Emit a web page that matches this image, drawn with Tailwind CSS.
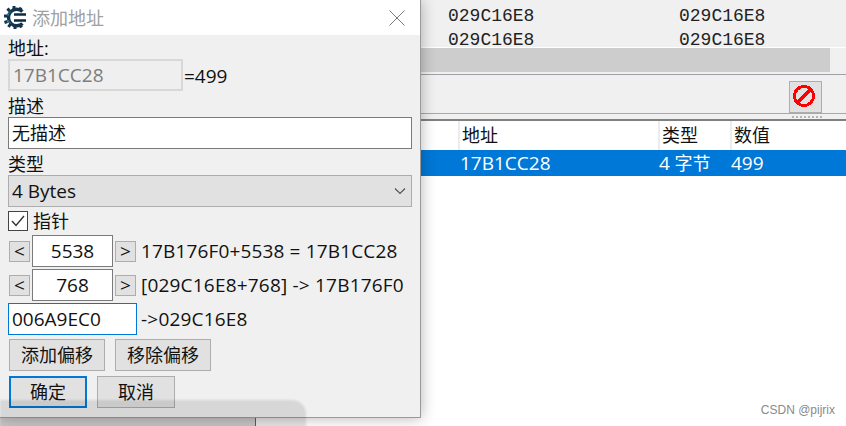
<!DOCTYPE html>
<html lang="en">
<head>
    <meta charset="UTF-8">
    <title>添加地址</title>
    <script src="https://cdn.jsdelivr.net/npm/@tailwindcss/browser@4"></script>
</head>
<body class="relative w-[846px] h-[426px] overflow-hidden bg-white text-[18px] leading-[24px] text-[#111] font-['Open_Sans','Noto_Sans_CJK_SC',sans-serif]">

    <!-- main window behind the dialog -->
    <div class="flex flex-col w-full h-full">
        <div class="h-[47px] pt-[9px] bg-[#f0f0f0] font-['Liberation_Mono',monospace] leading-[14px] text-[#222]">
            <div class="flex h-[24px] pl-[448px]"><span class="w-[231px]">029C16E8</span><span>029C16E8</span></div>
            <div class="flex h-[14px] pl-[448px]"><span class="w-[231px]">029C16E8</span><span>029C16E8</span></div>
        </div>
        <div class="h-[25px] border-t border-white bg-[#f0f0f0]">
            <div class="w-[830px] h-[24px] bg-[#cdcdcd]"></div>
        </div>
        <div class="h-[2px] bg-[#f0f0f0]"></div>
        <div class="h-[39px] flex items-start justify-end pt-[6px] pr-[24px] bg-[#f0f0f0] border-t border-[#a0a0a8]">
            <div class="w-[33px] h-[32px] pr-[3px] pb-[2px] flex items-center justify-center bg-[#e1e1e1] border border-[#adadad]">
                <svg width="24" height="24" viewBox="0 0 24 24" shape-rendering="crispEdges" fill="none" stroke="#ff0000" stroke-width="3">
                    <circle cx="12" cy="12" r="9.500"/>
                    <path d="M6 18 18 6"/>
                </svg>
            </div>
        </div>
        <div class="h-[6px] border-t border-[#a8a8a8] bg-[#f0f0f0] flex justify-end pr-[24px] pt-[2px]">
            <div class="w-[30px] h-[2px] bg-[repeating-linear-gradient(90deg,#b4b4b4_0_2px,transparent_2px_4px)]"></div>
        </div>
        <div class="h-[31px] flex border-t-2 border-[#808080] bg-white pl-[458px]">
            <div class="w-[200px] pl-[2px] pt-[2px] border-l-2 border-[#ececec]">地址</div>
            <div class="w-[72px] pl-[2px] pt-[2px] border-l-2 border-[#ececec]">类型</div>
            <div class="pl-[2px] pt-[2px] border-l-2 border-[#ececec]">数值</div>
        </div>
        <div class="h-[26px] flex items-center bg-[#0078d7] text-white pl-[460px]">
            <span class="w-[199px] text-[19px]">17B1CC28</span>
            <span class="w-[72px]"><span class="text-[19px]">4</span> 字节</span>
            <span class="text-[19px]">499</span>
        </div>
    </div>

    <!-- bottom strip under the dialog -->
    <div class="absolute left-0 top-[418px] w-[256px] h-[8px] bg-[#dcdcdc] border-r border-[#666]"></div>

    <!-- add address dialog -->
    <div class="absolute left-0 top-0 w-[421px] h-[418px] flex flex-col bg-[#f0f0f0] border-r border-b border-[#9a9a9a] shadow-[0_0_14px_rgba(0,0,0,0.3)]">
        <div class="h-[35px] shrink-0 flex items-center bg-white pl-[4px] pr-[15px]">
            <svg width="23" height="23" viewBox="0 0 23 23" fill="none">
                <path d="M18.500 5.500A8.300 8.300 0 1 0 18.500 17.500" stroke="#12344c" stroke-width="3.400"/>
                <path d="M10 0v3M3.500 2.500l2 2.500M0 10h3M0.500 16.500l3-1M4.500 21l2-3M11 23v-3M17.500 21.500l-1.500-3M17 1.500l-1.500 3" stroke="#12344c" stroke-width="3"/>
                <path d="M10 8.500h12M10 14.500h12" stroke="#0c2a40" stroke-width="2.600"/>
                <path d="M3.800 10a7.500 7.500 0 0 1 3-4.500M4 14a7.500 7.500 0 0 0 3 3.500" stroke="#2a7fa8" stroke-width="1"/>
            </svg>
            <span class="ml-[5px] text-[#a0a0a0]">添加地址</span>
            <svg class="ml-auto" width="16" height="16" viewBox="0 0 16 16" stroke="#7a7a7a" stroke-width="1"><path d="M0.500 0.500 15.500 15.500M15.500 0.500 0.500 15.500"/></svg>
        </div>

        <div class="flex flex-col pl-[8px] pr-[8px]">
            <div class="h-[24px] pt-[1px]">地址:</div>
            <div class="flex items-center h-[32px]">
                <div class="w-[175px] h-[32px] pl-[3px] flex items-center bg-[#efefef] border-2 border-[#d8d8d8] text-[19px] text-[#7d7d7d]">17B1CC28</div>
                <span class="ml-[1px] mt-[2px] text-[19px]">=499</span>
            </div>
            <div class="h-[26px] pt-[3px]">描述</div>
            <div class="h-[32px] pl-[3px] flex items-center bg-white border border-[#7a7a7a]">无描述</div>
            <div class="h-[26px] pt-[3px]">类型</div>
            <div class="h-[32px] pl-[3px] pr-[5px] flex items-center justify-between bg-[#e1e1e1] border border-[#adadad]">
                <span class="text-[19px]">4 Bytes</span>
                <svg width="12" height="8" viewBox="0 0 12 8" fill="none" stroke="#555" stroke-width="1.200"><path d="M1 1.500 6 6.500 11 1.500"/></svg>
            </div>
            <div class="flex items-center h-[20px] mt-[4px]">
                <div class="w-[20px] h-[20px] flex items-center justify-center bg-white border border-[#444]">
                    <svg width="14" height="12" viewBox="0 0 14 12" fill="none" stroke="#333" stroke-width="1.400"><path d="M1 6 5 10.500 13 1"/></svg>
                </div>
                <span class="ml-[5px]">指针</span>
            </div>

            <div class="flex items-center h-[32px] mt-[4px] text-[19px]">
                <button class="w-[21px] h-[21px] ml-[1px] flex items-center justify-center bg-[#e1e1e1] border border-[#adadad]">&lt;</button>
                <div class="w-[81px] h-[32px] ml-[2px] flex items-center justify-center bg-white border border-[#7a7a7a]">5538</div>
                <button class="w-[21px] h-[21px] ml-[2px] flex items-center justify-center bg-[#e1e1e1] border border-[#adadad]">&gt;</button>
                <span class="ml-[5px] tracking-[0.15px]">17B176F0+5538 = 17B1CC28</span>
            </div>
            <div class="flex items-center h-[32px] mt-[2px] text-[19px]">
                <button class="w-[21px] h-[21px] ml-[1px] flex items-center justify-center bg-[#e1e1e1] border border-[#adadad]">&lt;</button>
                <div class="w-[81px] h-[32px] ml-[2px] flex items-center justify-center bg-white border border-[#7a7a7a]">768</div>
                <button class="w-[21px] h-[21px] ml-[2px] flex items-center justify-center bg-[#e1e1e1] border border-[#adadad]">&gt;</button>
                <span class="ml-[5px] tracking-[0.2px]">[029C16E8+768] -&gt; 17B176F0</span>
            </div>
            <div class="flex items-center h-[32px] mt-[2px] text-[19px]">
                <div class="w-[129px] h-[32px] pl-[3px] flex items-center bg-white border border-[#0078d7]">006A9EC0</div>
                <span class="ml-[4px] tracking-[0.2px]">-&gt;029C16E8</span>
            </div>
            <div class="flex h-[32px] mt-[4px] ml-[1px] gap-[10px]">
                <button class="w-[96px] h-[32px] bg-[#e1e1e1] border border-[#adadad]">添加偏移</button>
                <button class="w-[96px] h-[32px] bg-[#e1e1e1] border border-[#adadad]">移除偏移</button>
            </div>
            <div class="flex h-[32px] mt-[5px] ml-[1px] gap-[10px]">
                <button class="w-[78px] h-[32px] bg-[#e1e1e1] border-2 border-[#0078d7]">确定</button>
                <button class="w-[78px] h-[32px] bg-[#e1e1e1] border border-[#adadad]">取消</button>
            </div>
        </div>
    </div>

    <!-- blurred shadow over the bottom edge -->
    <div class="absolute left-0 top-[400px] w-[306px] h-[40px] rounded-tr-[14px] bg-black/10 blur-[1px]"></div>

    <div class="absolute right-[11px] top-[402px] text-[12px] leading-[16px] text-[#8a8a8a] font-['Liberation_Sans',sans-serif]">CSDN @pijrix</div>
</body>
</html>
